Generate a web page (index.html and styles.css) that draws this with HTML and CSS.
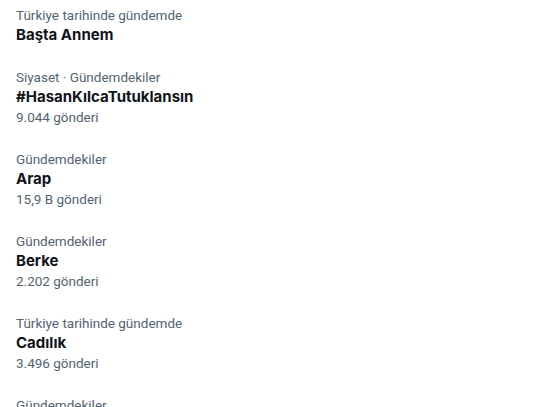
FILE: index.html
```html
<!DOCTYPE html>
<html lang="tr">
<head>
<meta charset="utf-8">
<link rel="stylesheet" href="styles.css">
</head>
<body>
<div class="trends">
  <div class="trend">
    <div class="meta">Türkiye tarihinde gündemde</div>
    <div class="name">Başta Annem</div>
  </div>
  <div class="trend">
    <div class="meta">Siyaset · Gündemdekiler</div>
    <div class="name">#HasanKılcaTutuklansın</div>
    <div class="count">9.044 gönderi</div>
  </div>
  <div class="trend">
    <div class="meta">Gündemdekiler</div>
    <div class="name">Arap</div>
    <div class="count">15,9 B gönderi</div>
  </div>
  <div class="trend">
    <div class="meta">Gündemdekiler</div>
    <div class="name">Berke</div>
    <div class="count">2.202 gönderi</div>
  </div>
  <div class="trend">
    <div class="meta">Türkiye tarihinde gündemde</div>
    <div class="name">Cadılık</div>
    <div class="count">3.496 gönderi</div>
  </div>
  <div class="trend">
    <div class="meta">Gündemdekiler</div>
    <div class="name">Gündem</div>
    <div class="count">1.000 gönderi</div>
  </div>
</div>
</body>
</html>
```
FILE: styles.css
```css
html, body {
  margin: 0;
  padding: 0;
  background: #ffffff;
  overflow: hidden;
  height: 407px;
}
body {
  font-family: Inter, "Noto Sans", sans-serif;
  color: #0f1419;
}
.trends {
  display: flex;
  flex-direction: column;
  margin-top: -6px;
}
.trend {
  padding: 11px 16px;
  display: flex;
  flex-direction: column;
}
.meta, .count {
  font-family: Roboto, "Noto Sans", sans-serif;
  font-size: 13.5px;
  line-height: 20px;
  color: #536471;
}
.name {
  font-size: 15px;
  line-height: 20px;
  font-weight: 700;
  color: #0f1419;
}
```
